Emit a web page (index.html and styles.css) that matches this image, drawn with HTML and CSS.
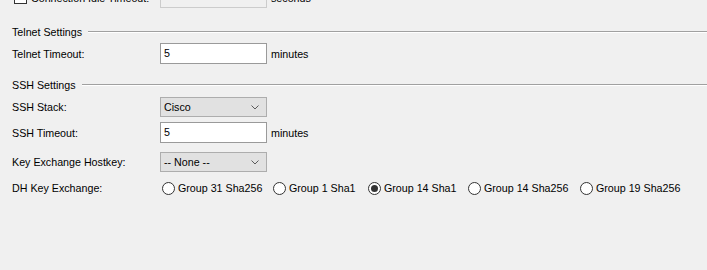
FILE: index.html
```html
<!DOCTYPE html>
<html>
<head>
<meta charset="utf-8">
<link rel="stylesheet" href="styles.css">
</head>
<body>
<div class="page">
  <div class="row row-top">
    <div class="label check-label"><span class="checkbox"></span>Connection Idle Timeout:</div>
    <div class="input disabled"></div>
    <div class="unit">seconds</div>
  </div>

  <div class="group g1"><span class="group-title">Telnet Settings</span><span class="rule"></span></div>
  <div class="row r-telnet">
    <div class="label">Telnet Timeout:</div>
    <div class="input">5</div>
    <div class="unit">minutes</div>
  </div>

  <div class="group g2"><span class="group-title">SSH Settings</span><span class="rule"></span></div>
  <div class="row r-stack">
    <div class="label">SSH Stack:</div>
    <div class="select"><span>Cisco</span><svg class="chev" width="8" height="5" viewBox="0 0 8 5"><path d="M0.5 0.5 L4 4 L7.5 0.5" fill="none" stroke="#5a5a5a" stroke-width="1"/></svg></div>
  </div>
  <div class="row r-sshto">
    <div class="label">SSH Timeout:</div>
    <div class="input">5</div>
    <div class="unit">minutes</div>
  </div>
  <div class="row r-kex">
    <div class="label">Key Exchange Hostkey:</div>
    <div class="select"><span>-- None --</span><svg class="chev" width="8" height="5" viewBox="0 0 8 5"><path d="M0.5 0.5 L4 4 L7.5 0.5" fill="none" stroke="#5a5a5a" stroke-width="1"/></svg></div>
  </div>
  <div class="row r-dh">
    <div class="label">DH Key Exchange:</div>
    <div class="radios">
      <div class="radio"><span class="dot"></span>Group 31 Sha256</div>
      <div class="radio"><span class="dot"></span>Group 1 Sha1</div>
      <div class="radio"><span class="dot on"></span>Group 14 Sha1</div>
      <div class="radio"><span class="dot"></span>Group 14 Sha256</div>
      <div class="radio"><span class="dot"></span>Group 19 Sha256</div>
    </div>
  </div>
</div>
</body>
</html>
```
FILE: styles.css
```css
html, body {
  margin: 0;
  padding: 0;
  background: #f0f0f0;
  overflow: hidden;
}
body {
  font-family: "Liberation Sans", Arial, sans-serif;
  font-size: 10.7px;
  color: #000;
}
.page {
  display: flex;
  flex-direction: column;
  padding-left: 12px;
  width: 695px;
}
.row {
  display: grid;
  grid-template-columns: 144px 107px auto;
  align-items: center;
  column-gap: 4px;
}
.label {
  display: flex;
  align-items: center;
  white-space: nowrap;
}
.check-label {
  margin-left: 2px;
}
.checkbox {
  width: 11px;
  height: 11px;
  border: 1px solid #333;
  background: #fff;
  margin-right: 4px;
}
.input {
  box-sizing: border-box;
  height: 21px;
  border: 1px solid #9a9a9a;
  background: #fff;
  padding-left: 3px;
  line-height: 19px;
}
.input.disabled {
  background: #f0f0f0;
  border-color: #cccccc;
}
.select {
  box-sizing: border-box;
  height: 20px;
  border: 1px solid #adadad;
  background: #e1e1e1;
  padding: 0 7px 0 3px;
  display: flex;
  align-items: center;
  justify-content: space-between;
}
.chev {
  display: block;
  margin-top: 1px;
}
.unit {
  white-space: nowrap;
}
.row-top {
  margin-top: -13px;
  height: 21px;
}
.group {
  display: flex;
  align-items: center;
  height: 14px;
}
.group-title {
  white-space: nowrap;
}
.rule {
  flex: 1;
  height: 0;
  border-top: 1px solid #a0a0a0;
  border-bottom: 1px solid #ffffff;
  margin-left: 6px;
}
.g1 { margin-top: 17px; }
.r-telnet { margin-top: 4px; height: 21px; }
.g2 { margin-top: 14px; }
.r-stack { margin-top: 5px; height: 20px; }
.r-sshto { margin-top: 5px; height: 21px; }
.r-kex { margin-top: 9px; height: 20px; }
.r-dh { margin-top: 6px; height: 20px; grid-template-columns: 146px auto; }
.radios {
  display: grid;
  grid-template-columns: 111px 95px 100px 112px auto;
  align-items: center;
}
.radio {
  display: flex;
  align-items: center;
  white-space: nowrap;
}
.dot {
  box-sizing: border-box;
  width: 13px;
  height: 13px;
  border: 1px solid #333;
  border-radius: 50%;
  background: #fff;
  margin-right: 3px;
  display: flex;
  align-items: center;
  justify-content: center;
}
.dot.on::after {
  content: "";
  width: 7px;
  height: 7px;
  border-radius: 50%;
  background: #333;
}
```
